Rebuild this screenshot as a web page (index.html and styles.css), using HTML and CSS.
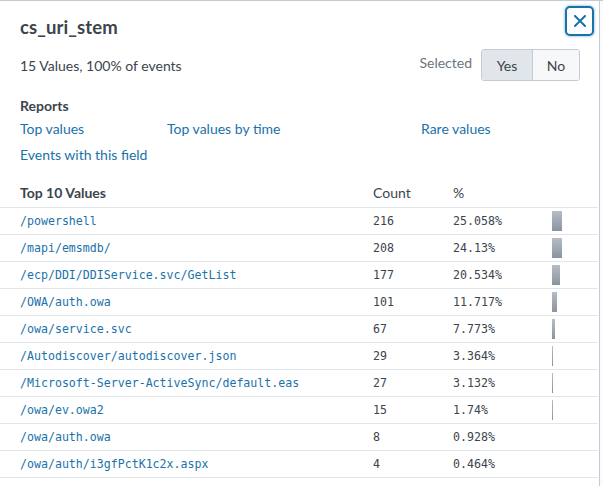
FILE: index.html
```html
<!DOCTYPE html>
<html>
<head>
<meta charset="utf-8">
<link rel="stylesheet" href="styles.css">
</head>
<body>
<div class="page">
  <div class="panel">
    <div class="head">
      <h1 class="title">cs_uri_stem</h1>
      <button class="close" aria-label="Close">
        <svg width="12" height="12" viewBox="0 0 12 12"><path d="M1 1 L11 11 M11 1 L1 11" stroke="#1a72aa" stroke-width="2" stroke-linecap="square" fill="none"/></svg>
      </button>
    </div>
    <div class="summary">
      <span class="count">15 Values, 100% of events</span>
      <div class="selected">
        <span class="sel-label">Selected</span>
        <div class="toggle">
          <span class="opt on">Yes</span>
          <span class="opt">No</span>
        </div>
      </div>
    </div>
    <div class="reports">
      <div class="reports-title">Reports</div>
      <div class="links">
        <a class="link">Top values</a>
        <a class="link">Top values by time</a>
        <a class="link">Rare values</a>
        <a class="link">Events with this field</a>
      </div>
    </div>
    <table class="values">
      <thead>
        <tr><th class="c-val">Top 10 Values</th><th class="c-cnt">Count</th><th class="c-pct">%</th><th class="c-bar"></th></tr>
      </thead>
      <tbody>
        <tr><td class="c-val"><a>/powershell</a></td><td class="c-cnt">216</td><td class="c-pct">25.058%</td><td class="c-bar"><span class="bar" style="width:10px"></span></td></tr>
        <tr><td class="c-val"><a>/mapi/emsmdb/</a></td><td class="c-cnt">208</td><td class="c-pct">24.13%</td><td class="c-bar"><span class="bar" style="width:10px"></span></td></tr>
        <tr><td class="c-val"><a>/ecp/DDI/DDIService.svc/GetList</a></td><td class="c-cnt">177</td><td class="c-pct">20.534%</td><td class="c-bar"><span class="bar" style="width:8px"></span></td></tr>
        <tr><td class="c-val"><a>/OWA/auth.owa</a></td><td class="c-cnt">101</td><td class="c-pct">11.717%</td><td class="c-bar"><span class="bar" style="width:5px"></span></td></tr>
        <tr><td class="c-val"><a>/owa/service.svc</a></td><td class="c-cnt">67</td><td class="c-pct">7.773%</td><td class="c-bar"><span class="bar" style="width:3px"></span></td></tr>
        <tr><td class="c-val"><a>/Autodiscover/autodiscover.json</a></td><td class="c-cnt">29</td><td class="c-pct">3.364%</td><td class="c-bar"><span class="bar" style="width:1px"></span></td></tr>
        <tr><td class="c-val"><a>/Microsoft-Server-ActiveSync/default.eas</a></td><td class="c-cnt">27</td><td class="c-pct">3.132%</td><td class="c-bar"><span class="bar" style="width:1px"></span></td></tr>
        <tr><td class="c-val"><a>/owa/ev.owa2</a></td><td class="c-cnt">15</td><td class="c-pct">1.74%</td><td class="c-bar"><span class="bar" style="width:1px"></span></td></tr>
        <tr><td class="c-val"><a>/owa/auth.owa</a></td><td class="c-cnt">8</td><td class="c-pct">0.928%</td><td class="c-bar"></td></tr>
        <tr><td class="c-val"><a>/owa/auth/i3gfPctK1c2x.aspx</a></td><td class="c-cnt">4</td><td class="c-pct">0.464%</td><td class="c-bar"></td></tr>
      </tbody>
    </table>
  </div>
  <div class="behind"></div>
</div>
</body>
</html>
```

FILE: styles.css
```css
* { box-sizing: border-box; }
html, body { margin: 0; padding: 0; }
body {
  width: 603px;
  height: 486px;
  overflow: hidden;
  background: #ffffff;
  font-family: Lato, "Open Sans", sans-serif;
  color: #3c444d;
}
.page {
  display: flex;
  height: 486px;
  border-top: 1px solid #c3cbd4;
}
.panel {
  width: 600px;
  flex: none;
  border-right: 1px solid #c3cbd4;
  background: #fff;
}
.behind {
  flex: 1;
  background: #fafbfc;
}
.head {
  display: flex;
  justify-content: space-between;
  align-items: flex-start;
  padding: 5px 5px 0 20px;
}
.title {
  margin: 10px 0 0 0;
  font-size: 18.5px;
  font-weight: 700;
  line-height: 22px;
  letter-spacing: 0.1px;
  color: #3c444d;
}
.close {
  width: 29px;
  height: 30px;
  padding: 0;
  margin: 0;
  background: #fff;
  border: 2px solid #1a72aa;
  border-radius: 5px;
  box-shadow: 0 0 2px 1px rgba(26,114,170,0.3);
  display: flex;
  align-items: center;
  justify-content: center;
}
.summary {
  display: flex;
  justify-content: space-between;
  align-items: center;
  padding: 0 19px 0 20px;
  margin-top: 11px;
  font-size: 14px;
}
.count { color: #3c444d; }
.selected { display: flex; align-items: center; }
.sel-label { color: #6b7580; margin-right: 9px; margin-top: -6px; }
.toggle {
  display: flex;
  border: 1px solid #c3cbd4;
  border-radius: 3px;
  height: 32px;
  overflow: hidden;
}
.opt {
  display: flex;
  align-items: center;
  justify-content: center;
  background: #f7f8fa;
  color: #3c444d;
  width: 46px;
}
.opt.on {
  background: #e1e6eb;
  width: 51px;
  border-right: 1px solid #c3cbd4;
}
.reports { padding: 0 20px; margin-top: 16px; }
.reports-title {
  font-size: 14px;
  font-weight: 700;
  line-height: 18px;
}
.links {
  display: grid;
  grid-template-columns: 147px 254px auto;
  row-gap: 8px;
  margin-top: 5px;
  font-size: 14px;
  line-height: 18px;
}
.link { color: #1a72aa; text-decoration: none; }
.values {
  width: 598px;
  border-collapse: collapse;
  margin-top: 16px;
  table-layout: fixed;
}
.values th {
  font-size: 14px;
  text-align: left;
  font-weight: 400;
  height: 27px;
  padding: 0 0 6px 0;
  vertical-align: bottom;
  border-bottom: 1px solid #e1e6eb;
  color: #3c444d;
}
.values th.c-val { font-weight: 700; padding-left: 20px; }
.values td {
  height: 27px;
  padding: 1px 0 0 0;
  border-bottom: 1px solid #e1e6eb;
  font-family: "DejaVu Sans Mono", monospace;
  font-size: 11.6px;
  color: #3c444d;
  white-space: nowrap;
}
.values td.c-val { padding-left: 20px; }
.values td a { color: #1a72aa; }
.c-val { width: 373px; }
.c-cnt { width: 80px; }
.c-pct { width: 99px; }
.c-bar { width: 46px; }
.values td.c-bar { vertical-align: middle; padding-top: 0; }
.bar {
  display: block;
  height: 20px;
  background: linear-gradient(#b5bdc6, #8a94a0);
}
```
